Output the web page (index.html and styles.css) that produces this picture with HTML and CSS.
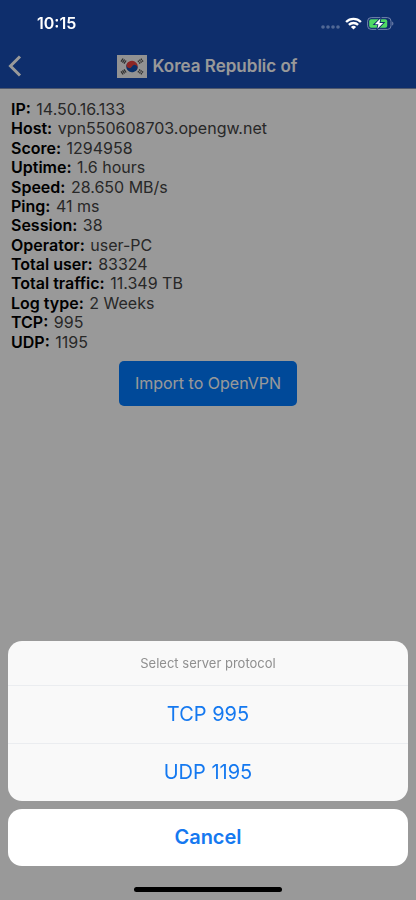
FILE: index.html
```html
<!DOCTYPE html>
<html lang="en">
<head>
<meta charset="utf-8">
<meta name="viewport" content="width=device-width, initial-scale=1">
<title>Korea Republic of</title>
<link rel="stylesheet" href="styles.css">
</head>
<body>
<div class="page">
  <header class="navbar">
    <a class="back" href="#" aria-label="Back">
      <svg width="14" height="22" viewBox="0 0 14 22"><path d="M12 1.5 2.5 11 12 20.5" fill="none" stroke="currentColor" stroke-width="3"/></svg>
    </a>
    <h1 class="title">
      <svg class="flag" width="30" height="23" viewBox="0 0 30 23" aria-hidden="true">
        <rect width="30" height="23" fill="#f4f4f4"/>
        <g transform="rotate(28 15 11.5)">
          <path d="M9.2 11.5a5.8 5.8 0 0 1 11.6 0z" fill="#e8413f"/>
          <path d="M9.2 11.5a5.8 5.8 0 0 0 11.6 0z" fill="#0f4fae"/>
          <circle cx="12.1" cy="11.5" r="2.9" fill="#e8413f"/>
          <circle cx="17.9" cy="11.5" r="2.9" fill="#0f4fae"/>
        </g>
        <g stroke="#505050" stroke-width="1.3">
          <path d="M4 6.7 6.1 3.5M5.5 7.7 7.6 4.5M7 8.7 9.1 5.5"/>
          <path d="M26 16.3 23.9 19.5M24.5 15.3 22.4 18.5M23 14.3 20.9 17.5" stroke-dasharray="1.6 .6"/>
          <path d="M26 6.7 23.9 3.5M24.5 7.7 22.4 4.5M23 8.7 20.9 5.5" stroke-dasharray="1.6 .6"/>
          <path d="M4 16.3 6.1 19.5M5.5 15.3 7.6 18.5M7 14.3 9.1 17.5"/>
        </g>
      </svg>
      <span>Korea Republic of</span>
    </h1>
  </header>
  <main class="content">
    <dl class="details">
      <div><dt>IP:</dt> <dd>14.50.16.133</dd></div>
      <div><dt>Host:</dt> <dd>vpn550608703.opengw.net</dd></div>
      <div><dt>Score:</dt> <dd>1294958</dd></div>
      <div><dt>Uptime:</dt> <dd>1.6 hours</dd></div>
      <div><dt>Speed:</dt> <dd>28.650 MB/s</dd></div>
      <div><dt>Ping:</dt> <dd>41 ms</dd></div>
      <div><dt>Session:</dt> <dd>38</dd></div>
      <div><dt>Operator:</dt> <dd>user-PC</dd></div>
      <div><dt>Total user:</dt> <dd>83324</dd></div>
      <div><dt>Total traffic:</dt> <dd>11.349 TB</dd></div>
      <div><dt>Log type:</dt> <dd>2 Weeks</dd></div>
      <div><dt>TCP:</dt> <dd>995</dd></div>
      <div><dt>UDP:</dt> <dd>1195</dd></div>
    </dl>
    <button class="import" type="button">Import to OpenVPN</button>
  </main>
</div>

<div class="backdrop"></div>

<div class="statusbar">
  <time>10:15</time>
  <div class="indicators">
    <svg width="19" height="4" viewBox="0 0 19 4" fill="#fff" opacity=".28"><circle cx="2" cy="2" r="1.8"/><circle cx="7" cy="2" r="1.8"/><circle cx="12" cy="2" r="1.8"/><circle cx="17" cy="2" r="1.8"/></svg>
    <svg class="wifi" width="17" height="13" viewBox="0 0 17 13"><g fill="none" stroke="#fff" stroke-width="2.3"><path d="M1.1 5a10.4 10.4 0 0 1 14.8 0"/><path d="M3.9 7.9a6.5 6.5 0 0 1 9.2 0"/></g><path d="M8.5 12.6 5.9 10a3.7 3.7 0 0 1 5.2 0z" fill="#fff"/></svg>
    <svg class="battery" width="27" height="13" viewBox="0 0 27 13"><rect x=".6" y=".6" width="23.4" height="11.8" rx="3.6" fill="none" stroke="#7484ac" stroke-width="1"/><path d="M25.2 4.4v4.2c1.6-.6 1.6-3.6 0-4.2z" fill="#7484ac"/><rect x="2.2" y="2.2" width="18" height="8.6" rx="2" fill="#4fd964"/><path d="M13.4 1.6 7.8 7.2h3.6L10.4 11.8 16.2 5.9h-3.7z" fill="#fff" stroke="#0e2d6b" stroke-width="1.8" paint-order="stroke"/></svg>
  </div>
</div>

<div class="sheet" role="dialog" aria-labelledby="sheet-title">
  <div class="options">
    <h2 class="sheet-title" id="sheet-title">Select server protocol</h2>
    <button class="option" type="button">TCP 995</button>
    <button class="option" type="button">UDP 1195</button>
  </div>
  <button class="option cancel" type="button">Cancel</button>
  <div class="home-indicator"></div>
</div>
</body>
</html>
```
FILE: styles.css
```css
* {
  box-sizing: border-box;
}

body {
  margin: 0;
  background: #fff;
  color: #000;
  font-family: Inter, "Liberation Sans", sans-serif;
  font-size: 16px;
}

button {
  border: 0;
  font: inherit;
  cursor: pointer;
}

.page {
  min-height: 100vh;
}

.navbar {
  display: grid;
  grid-template-columns: 40px 1fr 42px;
  align-items: center;
  padding-top: 44px;
  height: 89px;
  background: #184db4;
  border-bottom: 1px solid #8292b4;
  color: #fff;
}

.back {
  display: flex;
  padding-left: 8px;
  color: inherit;
}

.title {
  display: flex;
  justify-content: center;
  align-items: center;
  gap: 6px;
  margin: 0;
  font-size: 17px;
  font-weight: 600;
  line-height: 24px;
  white-space: nowrap;
}

.content {
  display: flex;
  flex-direction: column;
  align-items: center;
  gap: 9px;
  padding: 11px;
}

.details {
  display: grid;
  grid-auto-rows: 1fr;
  align-self: stretch;
  min-height: 252px;
  margin: 0;
  line-height: 19px;
}

.details dt,
.details dd {
  display: inline;
  margin: 0;
}

.details dt {
  font-weight: 600;
}

.details dd {
  margin-left: 1px;
  color: #444;
}

.import {
  padding: 0 16px;
  border-radius: 5px;
  background: #007bff;
  color: #fff;
  line-height: 45px;
}

.backdrop {
  position: fixed;
  inset: 0;
  background: rgba(0, 0, 0, 0.4);
}

.statusbar {
  position: fixed;
  inset: 0 0 auto;
  display: flex;
  justify-content: space-between;
  align-items: center;
  height: 46px;
  padding: 0 22px 0 37px;
  color: #fff;
  font-weight: 600;
}

.indicators {
  display: flex;
  align-items: center;
  gap: 5px;
}

.indicators svg:first-child {
  margin-top: 8px;
}

.sheet {
  position: fixed;
  inset: auto 8px 8px;
  display: flex;
  flex-direction: column;
  gap: 8px;
}

.options {
  overflow: hidden;
  border-radius: 14px;
  background: #f9f9f9;
}

.sheet-title {
  margin: 0;
  color: #8f8f8f;
  font-size: 13px;
  font-weight: 400;
  line-height: 44px;
  text-align: center;
}

.option {
  display: block;
  width: 100%;
  padding: 0;
  border-top: 1px solid #ebedf0;
  background: transparent;
  color: #1579f0;
  font-size: 20px;
  line-height: 57px;
}

.cancel {
  border: 0;
  border-radius: 14px;
  background: #fff;
  font-weight: 600;
}

.home-indicator {
  align-self: center;
  width: 148px;
  height: 5px;
  margin-top: 13px;
  border-radius: 3px;
  background: #000;
}
```
